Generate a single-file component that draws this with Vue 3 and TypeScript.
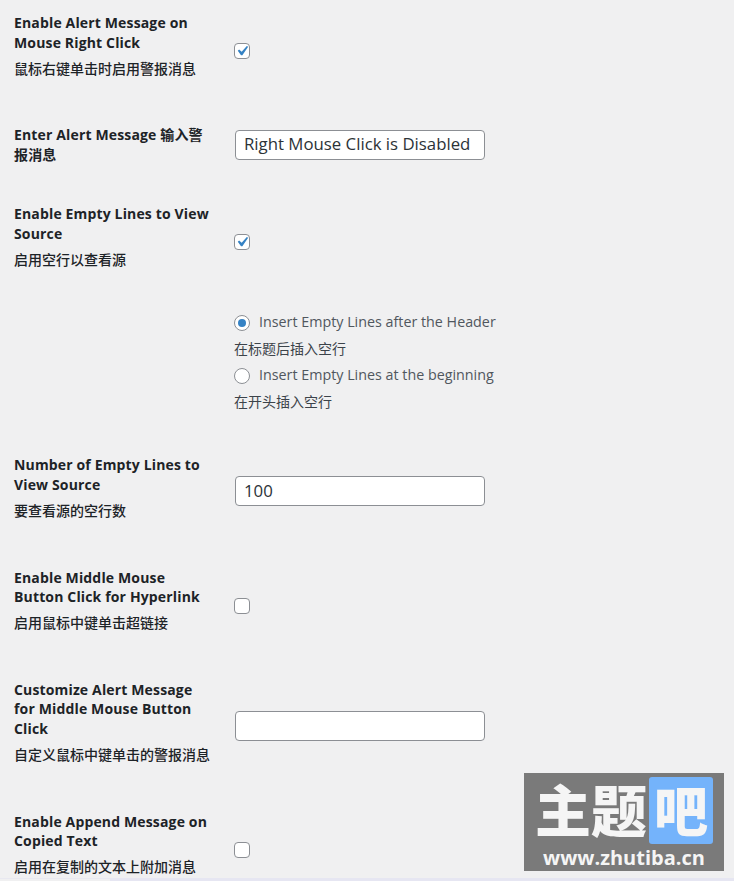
<script setup lang="ts">
type Row = {
  title: string
  sub?: string
  kind: 'check' | 'text' | 'radio'
  checked?: boolean
  value?: string
}

const rows: Row[] = [
  { title: 'Enable Alert Message on Mouse Right Click', sub: '鼠标右键单击时启用警报消息', kind: 'check', checked: true },
  { title: 'Enter Alert Message 输入警报消息', kind: 'text', value: 'Right Mouse Click is Disabled' },
  { title: 'Enable Empty Lines to View Source', sub: '启用空行以查看源', kind: 'check', checked: true },
  { title: '', kind: 'radio' },
  { title: 'Number of Empty Lines to View Source', sub: '要查看源的空行数', kind: 'text', value: '100' },
  { title: 'Enable Middle Mouse Button Click for Hyperlink', sub: '启用鼠标中键单击超链接', kind: 'check', checked: false },
  { title: 'Customize Alert Message for Middle Mouse Button Click', sub: '自定义鼠标中键单击的警报消息', kind: 'text', value: '' },
  { title: 'Enable Append Message on Copied Text', sub: '启用在复制的文本上附加消息', kind: 'check', checked: false },
]

const radios = [
  { label: 'Insert Empty Lines after the Header', sub: '在标题后插入空行', on: true },
  { label: 'Insert Empty Lines at the beginning', sub: '在开头插入空行', on: false },
]
</script>

<template>
  <div class="page">
    <table class="form-table">
      <tbody>
        <tr v-for="(row, i) in rows" :key="i" :class="{ short: !row.sub && row.title, 'radio-row': row.kind === 'radio' }">
          <th>
            {{ row.title }}
            <p v-if="row.sub" class="sub">{{ row.sub }}</p>
          </th>
          <td>
            <span v-if="row.kind === 'check'" class="check">
              <svg v-if="row.checked" viewBox="0 0 20 20" width="20" height="20">
                <path d="M14.83 4.89l1.34.94-5.81 8.38H9.02L5.78 9.67l1.34-1.25 2.57 2.4z" fill="#3582c4" />
              </svg>
            </span>
            <input v-else-if="row.kind === 'text'" class="text" type="text" :value="row.value" />
            <div v-else class="radios">
              <template v-for="r in radios" :key="r.label">
                <div class="radio-line">
                  <span class="radio"><i v-if="r.on" class="dot"></i></span>
                  {{ r.label }}
                </div>
                <div class="radio-sub">{{ r.sub }}</div>
              </template>
            </div>
          </td>
        </tr>
      </tbody>
    </table>

    <div class="mark">
      <div class="mark-top">
        <span class="mark-big">主题</span>
        <span class="mark-box">吧</span>
      </div>
      <div class="mark-url">www.zhutiba.cn</div>
    </div>
    <div class="strip-left"></div>
    <div class="strip"></div>
  </div>
</template>

<style>
html, body { background: #f0f0f1; }
</style>

<style scoped>
.page {
  position: relative;
  width: 734px;
  height: 881px;
  overflow: hidden;
  background: #f0f0f1;
  font-family: "Open Sans", "Noto Sans CJK SC", sans-serif;
  color: #1d2327;
}
.form-table {
  border-collapse: collapse;
  margin: -7px 0 0 14px;
  width: 560px;
  table-layout: fixed;
}
th {
  width: 197px;
  padding: 20px 13px 20px 0;
  text-align: left;
  vertical-align: middle;
  font-size: 14px;
  font-weight: 700;
  line-height: 19.6px;
  letter-spacing: 0.15px;
}
.short th {
  padding-bottom: 19.5px;
}
td {
  padding: 15px 10px;
  vertical-align: middle;
}
.radio-row td {
  padding: 13px 10px 20px;
}
.sub {
  margin: 6.5px 0 7px;
  font-weight: 500;
  font-size: 14px;
  line-height: 19.6px;
  letter-spacing: 0;
}
.check {
  display: block;
  position: relative;
  box-sizing: border-box;
  width: 16px;
  height: 16px;
  margin-top: 4px;
  border: 1px solid #8c8f94;
  border-radius: 4px;
  background: #fff;
}
.check svg {
  position: absolute;
  left: -3px;
  top: -3px;
}
.text {
  display: block;
  box-sizing: border-box;
  width: 250px;
  height: 30px;
  margin-left: 1px;
  padding: 0 8px 2px;
  border: 1px solid #8c8f94;
  border-radius: 4px;
  background: #fff;
  color: #2c3338;
  font: 16.8px/26px "Open Sans", sans-serif;
  outline: none;
}
.radios {
  font-size: 14px;
  color: #50575e;
  line-height: 26.5px;
}
.radio-line {
  display: flex;
  align-items: center;
  gap: 9px;
  font-size: 14.3px;
}
.radio-sub {
  color: #3c434a;
}
.radio {
  display: block;
  position: relative;
  box-sizing: border-box;
  width: 16px;
  height: 16px;
  border: 1px solid #8c8f94;
  border-radius: 50%;
  background: #fff;
}
.dot {
  position: absolute;
  left: 3px;
  top: 3px;
  width: 8px;
  height: 8px;
  border-radius: 50%;
  background: #3582c4;
}
.mark {
  position: absolute;
  left: 524px;
  top: 773px;
  width: 200px;
  height: 98px;
  background: #7a7a7a;
  color: #f5f5f5;
  font-family: "Noto Sans CJK SC", sans-serif;
}
.mark-top {
  display: flex;
  align-items: flex-start;
  height: 74px;
  padding: 4px 11px 0 13px;
  box-sizing: border-box;
}
.mark-big {
  width: 112px;
  margin-left: -2px;
  margin-right: 2px;
  font-size: 56px;
  font-weight: 900;
  line-height: 62px;
  white-space: nowrap;
}
.mark-box {
  width: 64px;
  height: 67px;
  border-radius: 3px;
  background: #74b3fb;
  font-size: 54px;
  font-weight: 900;
  line-height: 64px;
  text-align: center;
}
.mark-url {
  font-family: "Open Sans", sans-serif;
  font-size: 20px;
  font-weight: 700;
  line-height: 22px;
  text-align: center;
}
.strip-left {
  position: absolute;
  left: 0;
  width: 110px;
  bottom: 2px;
  height: 1px;
  background: #e8e8f0;
}
.strip {
  position: absolute;
  left: 110px;
  right: 0;
  bottom: 0;
  height: 3px;
  background: #e6e6f2;
}
</style>
